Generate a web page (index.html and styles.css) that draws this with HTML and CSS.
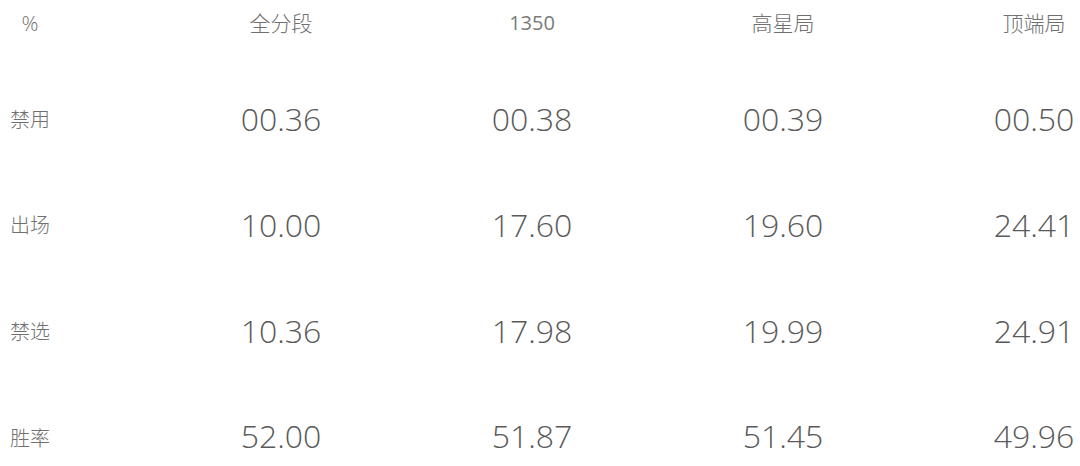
FILE: index.html
```html
<!DOCTYPE html>
<html lang="zh">
<head>
<meta charset="utf-8">
<link rel="stylesheet" href="styles.css">
</head>
<body>
<div class="table">
  <div class="head pct">%</div>
  <div class="head">全分段</div>
  <div class="head num-head">1350</div>
  <div class="head">高星局</div>
  <div class="head">顶端局</div>

  <div class="label">禁用</div>
  <div class="val">00.36</div>
  <div class="val">00.38</div>
  <div class="val">00.39</div>
  <div class="val">00.50</div>

  <div class="label">出场</div>
  <div class="val">10.00</div>
  <div class="val">17.60</div>
  <div class="val">19.60</div>
  <div class="val">24.41</div>

  <div class="label">禁选</div>
  <div class="val">10.36</div>
  <div class="val">17.98</div>
  <div class="val">19.99</div>
  <div class="val">24.91</div>

  <div class="label last">胜率</div>
  <div class="val last">52.00</div>
  <div class="val last">51.87</div>
  <div class="val last">51.45</div>
  <div class="val last">49.96</div>
</div>
</body>
</html>
```
FILE: styles.css
```css
html, body {
  margin: 0;
  padding: 0;
  background: #ffffff;
  overflow: hidden;
}
body {
  width: 1080px;
  height: 466px;
  font-family: "Open Sans", "Noto Sans CJK SC", sans-serif;
  color: #666;
}
.table {
  display: grid;
  grid-template-columns: 75px repeat(4, 90px);
  grid-template-rows: 65px 106px 106px 106px 81px;
  column-gap: 161px;
}
.table > div {
  display: flex;
  align-items: center;
  justify-content: center;
  white-space: nowrap;
}
.table > .head {
  align-self: start;
  height: 44px;
  font-family: "Noto Sans CJK SC", sans-serif;
  font-weight: 300;
  font-size: 21px;
  color: #707070;
}
.table > .num-head {
  font-family: "Open Sans", sans-serif;
  font-weight: 400;
  font-size: 20px;
  color: #7a7a7a;
}
.table > .pct {
  width: 60px;
  justify-self: start;
  font-family: "Open Sans", sans-serif;
  font-weight: 300;
  font-size: 21px;
  padding-top: 2px;
  box-sizing: border-box;
}
.table > .label {
  width: 60px;
  justify-self: start;
  font-family: "Noto Sans CJK SC", sans-serif;
  font-weight: 300;
  font-size: 20px;
  color: #707070;
}
.val {
  font-family: "Open Sans", sans-serif;
  font-weight: 300;
  font-size: 32px;
  color: #5a5a5a;
}
.table > .last {
  align-items: flex-start;
  padding-top: 31px;
  box-sizing: border-box;
}
.table > .label.last {
  padding-top: 40px;
}
```
